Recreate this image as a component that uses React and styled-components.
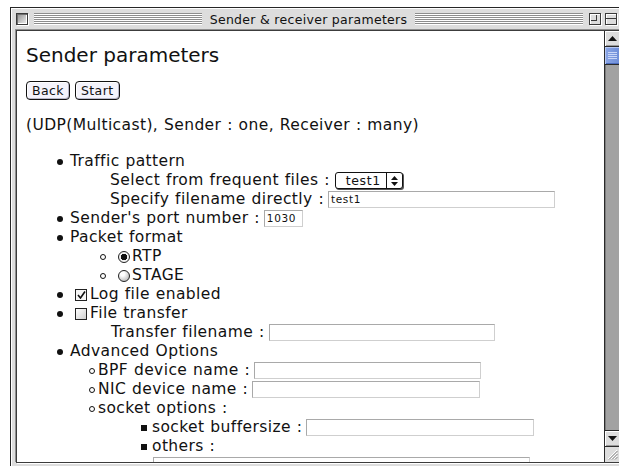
import React from "react";
import styled, { createGlobalStyle } from "styled-components";

const GlobalStyle = createGlobalStyle`
  html, body {
    margin: 0;
    padding: 0;
    background: #ffffff;
  }
  body {
    font-family: "DejaVu Sans", Verdana, sans-serif;
    overflow: hidden;
  }
`;

const Desktop = styled.div`
  width: 619px;
  height: 466px;
  padding: 7px 0 0 10px;
  box-sizing: border-box;
  overflow: hidden;
`;

const Window = styled.div`
  width: 616px;
  height: 463px;
  flex: none;
  box-sizing: border-box;
  border: 1px solid #262626;
  background: #dddddd;
  display: flex;
  flex-direction: column;
  box-shadow: inset 1px 1px 0 #ffffff;
`;

const TitleBar = styled.div`
  height: 22px;
  flex: none;
  display: flex;
  align-items: center;
  padding: 0 8px 0 5px;
  gap: 4px;
`;

const Box = styled.div`
  width: 10px;
  height: 10px;
  flex: none;
  border: 1px solid #3a3a3a;
  background: linear-gradient(135deg, #8e8e8e, #f2f2f2);
  box-shadow: inset 1px 1px 0 #6f6f6f, inset -1px -1px 0 #ffffff, 1px 1px 0 #ffffff;
  position: relative;
`;

const ZoomBox = styled(Box)`
  background: #dddddd;
  box-shadow: inset 1px 1px 0 #ffffff, 1px 1px 0 #ffffff;
  &::after {
    content: "";
    position: absolute;
    left: 1px;
    top: 1px;
    width: 5px;
    height: 5px;
    border-right: 1px solid #3a3a3a;
    border-bottom: 1px solid #3a3a3a;
  }
`;

const CollapseBox = styled(Box)`
  background: #dddddd;
  box-shadow: inset 1px 1px 0 #ffffff, 1px 1px 0 #ffffff;
  &::after {
    content: "";
    position: absolute;
    left: 0;
    right: 0;
    top: 4px;
    height: 1px;
    background: #3a3a3a;
  }
`;

const Stripes = styled.div`
  flex: 1;
  height: 12px;
  margin: 0 2px;
  background: repeating-linear-gradient(
    to bottom,
    #8d8d8d 0px,
    #8d8d8d 1px,
    #ffffff 1px,
    #ffffff 2px
  );
`;

const Title = styled.div`
  font-size: 12.5px;
  letter-spacing: 0.3px;
  color: #111111;
  white-space: nowrap;
  padding: 0 2px;
`;

const Frame = styled.div`
  flex: 1;
  display: flex;
  margin: 0 4px 6px 5px;
  border: 1px solid #3c3c3c;
  box-shadow: -1px -1px 0 #8f8f8f, 1px 1px 0 #ffffff;
  min-height: 0;
`;

const Content = styled.div`
  flex: 1;
  background: #ffffff;
  padding: 0 0 0 9px;
  color: #111111;
  font-size: 15.5px;
  letter-spacing: 0.4px;
  word-spacing: 0.5px;
  overflow: hidden;
`;

const Heading = styled.h1`
  margin: 12px 0 0;
  font-size: 20px;
  font-weight: normal;
  letter-spacing: 0;
  word-spacing: 0;
  line-height: 24px;
`;

const ButtonRow = styled.div`
  display: flex;
  gap: 5px;
  margin-top: 14px;
`;

const PushButton = styled.button`
  height: 19px;
  padding: 0 5px;
  border: 1px solid #111111;
  border-radius: 4px;
  background: #f4f3fb;
  box-shadow: inset -1px -1px 0 #b9b7c8, inset 1px 1px 0 #ffffff;
  font-family: "DejaVu Sans", Verdana, sans-serif;
  font-size: 12.5px;
  letter-spacing: 0.4px;
  color: #111111;
  line-height: 15px;
`;

const Intro = styled.p`
  margin: 16px 0 17px;
  line-height: 19px;
`;

const Row = styled.div`
  display: flex;
  align-items: center;
  height: 19px;
  padding-left: ${(p) => p.$indent}px;
  white-space: nowrap;
`;

const Marker = styled.span`
  flex: none;
  box-sizing: border-box;
  width: 6px;
  height: 6px;
  margin-right: ${(p) => p.$gap}px;
  margin-top: 1px;
  background: ${(p) => (p.$kind === "circle" ? "transparent" : "#111111")};
  border: ${(p) => (p.$kind === "circle" ? "1.5px solid #111111" : "none")};
  border-radius: ${(p) => (p.$kind === "square" ? "0" : "50%")};
`;

const Label = styled.span`
  line-height: 19px;
`;

const TextField = styled.span`
  display: inline-block;
  flex: none;
  width: ${(p) => p.$width}px;
  height: 17px;
  margin-left: 4px;
  box-sizing: border-box;
  border: 1px solid #cfcfcf;
  border-top-color: #a9a9a9;
  border-left-color: #a9a9a9;
  background: #ffffff;
  font-size: 10.5px;
  letter-spacing: 0.6px;
  line-height: 15px;
  padding-left: 2px;
  color: #111111;
`;

const WrapField = styled(TextField)`
  display: block;
  margin: 1px 0 0 ${(p) => p.$indent}px;
`;

const Popup = styled.span`
  display: inline-flex;
  align-items: stretch;
  height: 17px;
  box-sizing: border-box;
  margin-left: 5px;
  border: 1px solid #111111;
  border-radius: 3px;
  background: #ffffff;
  box-shadow: 1px 1px 0 #555555;
  font-size: 12.5px;
  letter-spacing: 0.6px;
  line-height: 15px;
`;

const PopupText = styled.span`
  padding: 0 5px 0 10px;
`;

const PopupArrows = styled.span`
  display: flex;
  align-items: center;
  justify-content: center;
  width: 15px;
  border-left: 1px solid #111111;
`;

const Radio = styled.span`
  flex: none;
  width: 12px;
  height: 12px;
  margin-right: 2px;
  box-sizing: border-box;
  border-radius: 50%;
  border: 1px solid #222222;
  background: ${(p) =>
    p.$checked
      ? "radial-gradient(circle, #111111 0 3px, #f2f2f2 3.5px)"
      : "radial-gradient(circle at 35% 30%, #ffffff 0 2px, #c4c4c4 7px)"};
`;

const Check = styled.span`
  flex: none;
  width: 12px;
  height: 12px;
  margin-right: 3px;
  box-sizing: border-box;
  border: 1px solid #222222;
  background: ${(p) => (p.$checked ? "#f6f6f6" : "linear-gradient(135deg, #ffffff, #cfcfcf)")};
  display: flex;
  align-items: center;
  justify-content: center;
`;

const ScrollBar = styled.div`
  width: 15px;
  flex: none;
  display: flex;
  flex-direction: column;
  border-left: 1px solid #2a2a2a;
  background: #dddddd;
`;

const ArrowButton = styled.div`
  height: 15px;
  flex: none;
  display: flex;
  align-items: center;
  justify-content: center;
  background: #dddddd;
  box-shadow: inset 1px 1px 0 #ffffff, inset -1px -1px 0 #9a9a9a;
  border-bottom: ${(p) => (p.$top ? "1px solid #2a2a2a" : "none")};
  border-top: ${(p) => (p.$top ? "none" : "1px solid #2a2a2a")};
`;

const Track = styled.div`
  flex: 1;
  background: #a2a2a2;
  box-shadow: inset 1px 0 0 #7d7d7d, inset -1px 0 0 #bcbcbc;
`;

const Thumb = styled.div`
  height: 17px;
  flex: none;
  border-bottom: 1px solid #2a2a2a;
  background: linear-gradient(to right, #8ba6e6, #6d8dd8);
  box-shadow: inset 1px 1px 0 #b7c8f2, inset -1px -1px 0 #4c6cbc;
  display: flex;
  align-items: center;
  justify-content: center;
`;

const GrowBox = styled.div`
  height: 15px;
  flex: none;
  border-top: 1px solid #2a2a2a;
  background: #dddddd;
  display: flex;
  align-items: center;
  justify-content: center;
`;

function Triangle({ up }) {
  return (
    <svg width="9" height="5" viewBox="0 0 9 5">
      <path d={up ? "M0 5 L4.5 0 L9 5 Z" : "M0 0 L4.5 5 L9 0 Z"} fill="#111" />
    </svg>
  );
}

function Grip() {
  return (
    <svg width="9" height="9" viewBox="0 0 9 9">
      {[1, 3, 5, 7].map((y) => (
        <rect key={y} x="0" y={y} width="9" height="1" fill="#c9d6f7" />
      ))}
    </svg>
  );
}

function GrowLines() {
  return (
    <svg width="11" height="11" viewBox="0 0 11 11">
      <path d="M1 10 L10 1 M4 10 L10 4 M7 10 L10 7" stroke="#ffffff" strokeWidth="1" />
      <path d="M2 10.5 L10.5 2 M5 10.5 L10.5 5 M8 10.5 L10.5 8" stroke="#8a8a8a" strokeWidth="1" />
    </svg>
  );
}

function Item({ kind = "disc", indent, gap, children }) {
  return (
    <Row $indent={indent}>
      <Marker $kind={kind} $gap={gap} />
      {children}
    </Row>
  );
}

export default function App() {
  return (
    <>
      <GlobalStyle />
      <Desktop>
        <Window>
          <TitleBar>
            <Box />
            <Stripes />
            <Title>Sender &amp; receiver parameters</Title>
            <Stripes />
            <ZoomBox />
            <CollapseBox />
          </TitleBar>
          <Frame>
            <Content>
              <Heading>Sender parameters</Heading>
              <ButtonRow>
                <PushButton>Back</PushButton>
                <PushButton>Start</PushButton>
              </ButtonRow>
              <Intro>(UDP(Multicast), Sender : one, Receiver : many)</Intro>

              <Item indent={31} gap={7}>
                <Label>Traffic pattern</Label>
              </Item>
              <Row $indent={84}>
                <Label>Select from frequent files :</Label>
                <Popup>
                  <PopupText>test1</PopupText>
                  <PopupArrows>
                    <svg width="7" height="10" viewBox="0 0 7 10">
                      <path d="M0 4 L3.5 0 L7 4 Z M0 6 L3.5 10 L7 6 Z" fill="#111" />
                    </svg>
                  </PopupArrows>
                </Popup>
              </Row>
              <Row $indent={84}>
                <Label>Specify filename directly :</Label>
                <TextField $width={227}>test1</TextField>
              </Row>
              <Item indent={31} gap={7}>
                <Label>Sender's port number :</Label>
                <TextField $width={39}>1030</TextField>
              </Item>
              <Item indent={31} gap={7}>
                <Label>Packet format</Label>
              </Item>
              <Item kind="circle" indent={74} gap={12}>
                <Radio $checked />
                <Label>RTP</Label>
              </Item>
              <Item kind="circle" indent={74} gap={12}>
                <Radio />
                <Label>STAGE</Label>
              </Item>
              <Item indent={31} gap={12}>
                <Check $checked>
                  <svg width="9" height="8" viewBox="0 0 9 8">
                    <path d="M1 4 L3.5 7 L8 0.5" stroke="#111" strokeWidth="1.6" fill="none" />
                  </svg>
                </Check>
                <Label>Log file enabled</Label>
              </Item>
              <Item indent={31} gap={12}>
                <Check />
                <Label>File transfer</Label>
              </Item>
              <Row $indent={85}>
                <Label>Transfer filename :</Label>
                <TextField $width={226} />
              </Row>
              <Item indent={31} gap={7}>
                <Label>Advanced Options</Label>
              </Item>
              <Item kind="circle" indent={63} gap={3}>
                <Label>BPF device name :</Label>
                <TextField $width={227} />
              </Item>
              <Item kind="circle" indent={63} gap={3}>
                <Label>NIC device name :</Label>
                <TextField $width={228} />
              </Item>
              <Item kind="circle" indent={63} gap={3}>
                <Label>socket options :</Label>
              </Item>
              <Item kind="square" indent={115} gap={5}>
                <Label>socket buffersize :</Label>
                <TextField $width={228} />
              </Item>
              <Item kind="square" indent={115} gap={5}>
                <Label>others :</Label>
              </Item>
              <WrapField $width={377} $indent={127} />
            </Content>
            <ScrollBar>
              <ArrowButton $top>
                <Triangle up />
              </ArrowButton>
              <Thumb>
                <Grip />
              </Thumb>
              <Track />
              <ArrowButton>
                <Triangle />
              </ArrowButton>
              <GrowBox>
                <GrowLines />
              </GrowBox>
            </ScrollBar>
          </Frame>
        </Window>
      </Desktop>
    </>
  );
}
